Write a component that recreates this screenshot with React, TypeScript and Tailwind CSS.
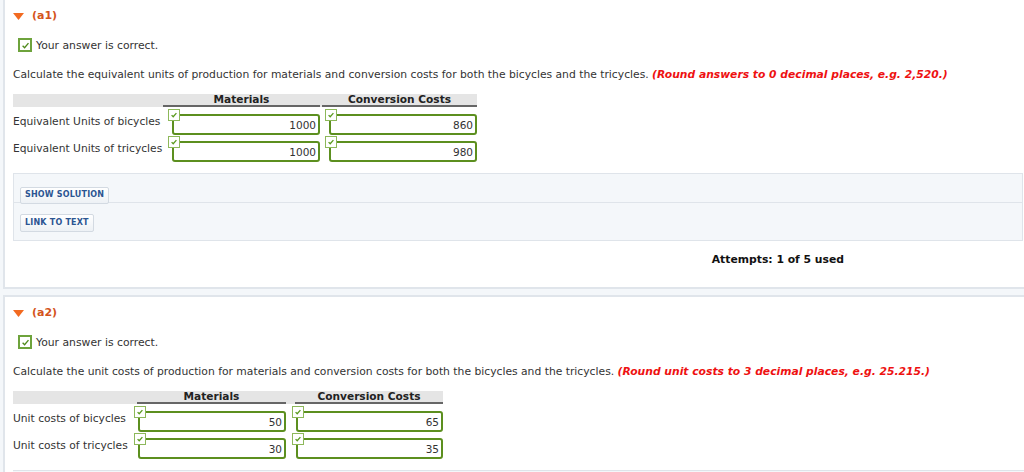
import React from 'react';

type Row = { label: string; mat: string; conv: string };

type TableProps = {
  rows: Row[];
  labelW: string;
  matW: string;
  convW: string;
  gapW: string;
  matInset: string;
  convInset: string;
};

function SmallCheck() {
  return (
    <span className="absolute -left-[6px] -top-[7px] flex h-[12px] w-[12px] items-center justify-center border border-[#8db85a] bg-white">
      <svg className="h-[8px] w-[8px]" viewBox="0 0 10 10" fill="none" stroke="#5a9a1e" strokeWidth="1.6">
        <path d="M2 5.2l2 2 4-4.5" />
      </svg>
    </span>
  );
}

function BigCheck() {
  return (
    <span className="flex h-[14px] w-[14px] items-center justify-center border-2 border-[#6ea33c] bg-white">
      <svg className="h-[9px] w-[9px]" viewBox="0 0 10 10" fill="none" stroke="#4f8a1c" strokeWidth="1.5">
        <path d="M1.8 5.2l2.2 2.2 4.3-5" />
      </svg>
    </span>
  );
}

function AnswerBox({ value, inset }: { value: string; inset: string }) {
  return (
    <div className={`relative ${inset} h-[21px] flex-1 rounded-[3px] border-2 border-[#5c8f1f] bg-white`}>
      <SmallCheck />
      <div className="pr-[2px] pt-[3px] text-right text-[10.5px] leading-[13px] text-[#333]">{value}</div>
    </div>
  );
}

function AnswerTable({ rows, labelW, matW, convW, gapW, matInset, convInset }: TableProps) {
  return (
    <div>
      <div className="flex h-[13px] w-fit bg-[#e5e5e5]">
        <div className={labelW} />
        <div className={`${matW} border-b-2 border-[#666] text-center text-[10.6px] font-bold leading-[11px] text-[#222]`}>Materials</div>
        <div className={gapW} />
        <div className={`${convW} border-b-2 border-[#666] text-center text-[10.6px] font-bold leading-[11px] text-[#222]`}>Conversion Costs</div>
      </div>
      <div className="mt-[7px] flex flex-col gap-[6px]">
        {rows.map((r) => (
          <div key={r.label} className="flex">
            <div className={`${labelW} pt-[1px] text-[10.7px] leading-[13px] text-[#333]`}>{r.label}</div>
            <div className={`${matW} flex`}>
              <AnswerBox value={r.mat} inset={matInset} />
            </div>
            <div className={gapW} />
            <div className={`${convW} flex`}>
              <AnswerBox value={r.conv} inset={convInset} />
            </div>
          </div>
        ))}
      </div>
    </div>
  );
}

function PartHeader({ name }: { name: string }) {
  return (
    <div className="flex items-center gap-[8px] pl-[8px]">
      <svg className="h-[7px] w-[11px]" viewBox="0 0 11 7">
        <path d="M0 0h11L5.5 7z" fill="#f26a21" />
      </svg>
      <span className="text-[11px] font-bold leading-[14px] text-[#d4541c]">{name}</span>
    </div>
  );
}

function Correct() {
  return (
    <div className="mt-[15px] flex items-center gap-[4px] pl-[13px]">
      <BigCheck />
      <span className="text-[10.8px] leading-[13px] text-[#333]">Your answer is correct.</span>
    </div>
  );
}

function SolutionBox() {
  return (
    <div className="border border-[#dfe4ea] bg-[#f4f7fa]">
      <div className="h-[29px] border-b border-[#dfe4ea] pl-[6px] pt-[6px]">
        <button className="h-[17px] rounded-[2px] border border-[#d3dae2] bg-gradient-to-b from-white to-[#edf1f5] px-[4px] text-[8px] font-bold leading-[14px] tracking-[0.2px] text-[#2c5592]">SHOW SOLUTION</button>
      </div>
      <div className="h-[37px] pl-[6px] pt-[5px]">
        <button className="h-[18px] rounded-[2px] border border-[#d3dae2] bg-gradient-to-b from-white to-[#edf1f5] px-[4px] text-[8px] font-bold leading-[15px] tracking-[0.2px] text-[#2c5592]">LINK TO TEXT</button>
      </div>
    </div>
  );
}

export default function App() {
  return (
    <div className="h-[472px] w-[1024px] overflow-hidden bg-[#f4f7fa] pl-[3px] font-['DejaVu_Sans',Verdana,sans-serif]">
      {/* part a1 */}
      <div className="h-[289px] border-b-2 border-l-2 border-[#e0e5eb] bg-white pt-[9px]">
        <PartHeader name="(a1)" />
        <Correct />
        <p className="mt-[16px] pl-[8px] text-[10.75px] leading-[13px] text-[#333]">
          Calculate the equivalent units of production for materials and conversion costs for both the bicycles and the tricycles.{' '}
          <span className="font-bold italic text-[#ee1111]">(Round answers to 0 decimal places, e.g. 2,520.)</span>
        </p>
        <div className="mt-[13px] pl-[8px]">
          <AnswerTable
            rows={[
              { label: 'Equivalent Units of bicycles', mat: '1000', conv: '860' },
              { label: 'Equivalent Units of tricycles', mat: '1000', conv: '980' },
            ]}
            labelW="w-[150px]"
            matW="w-[157px]"
            convW="w-[155px]"
            gapW="w-[2px]"
            matInset="ml-[9px]"
            convInset="ml-[7px]"
          />
        </div>
        <div className="mt-[11px] pl-[8px] pr-[1px]">
          <SolutionBox />
        </div>
        <div className="mt-[12px] pr-[180px] text-right text-[10.8px] font-bold leading-[13px] text-[#111]">Attempts: 1 of 5 used</div>
      </div>

      {/* part a2 */}
      <div className="mt-[6px] h-[200px] border-l-2 border-t-2 border-[#e0e5eb] bg-white pt-[9px]">
        <PartHeader name="(a2)" />
        <Correct />
        <p className="mt-[16px] pl-[8px] text-[10.75px] leading-[13px] text-[#333]">
          Calculate the unit costs of production for materials and conversion costs for both the bicycles and the tricycles.{' '}
          <span className="font-bold italic text-[#ee1111]">(Round unit costs to 3 decimal places, e.g. 25.215.)</span>
        </p>
        <div className="mt-[13px] pl-[8px]">
          <AnswerTable
            rows={[
              { label: 'Unit costs of bicycles', mat: '50', conv: '65' },
              { label: 'Unit costs of tricycles', mat: '30', conv: '35' },
            ]}
            labelW="w-[124px]"
            matW="w-[149px]"
            convW="w-[148px]"
            gapW="w-[9px]"
            matInset="ml-[1px]"
            convInset="ml-[1px]"
          />
        </div>
        <div className="ml-[8px] mt-[11px] h-[10px] border-t border-[#dfe4ea] bg-[#f4f7fa]" />
      </div>
    </div>
  );
}
